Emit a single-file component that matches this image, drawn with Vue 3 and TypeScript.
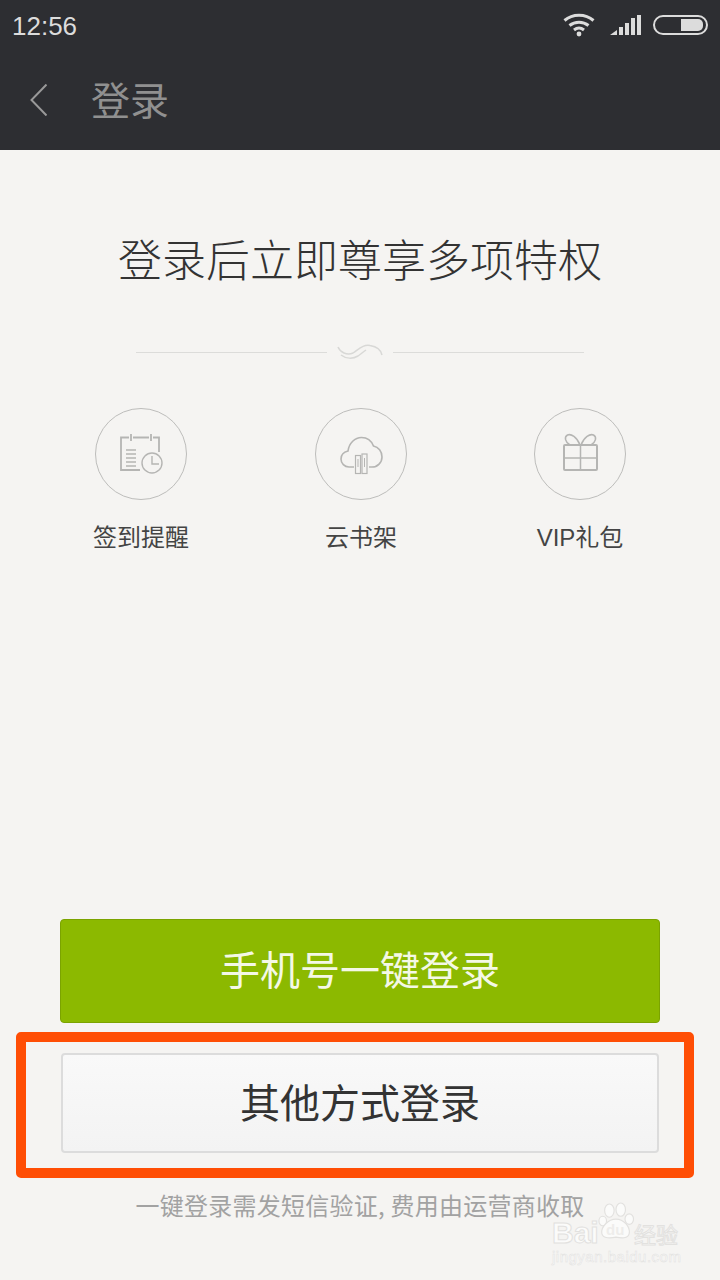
<template>
  <div class="page">
    <header class="top">
      <div class="status">
        <span class="time">12:56</span>
        <div class="status-icons">
          <svg class="wifi" width="32" height="24" viewBox="0 0 32 24" fill="none" stroke="#dcdcdc" stroke-width="3">
            <path d="M1.5 7.5C9.5 0.5 22.5 0.5 30.5 7.5" />
            <path d="M6.5 12.5C12 8 20 8 25.5 12.5" />
            <path d="M11 17C14 14.6 18 14.6 21 17" />
            <circle cx="16" cy="21" r="2.4" fill="#dcdcdc" stroke="none" />
          </svg>
          <svg class="signal" width="31" height="22" viewBox="0 0 31 22" fill="#dcdcdc">
            <path d="M0 21L7 16V21Z" />
            <rect x="9" y="13" width="4" height="8" />
            <rect x="15" y="9" width="4" height="12" />
            <rect x="21" y="4" width="4" height="17" />
            <rect x="27" y="1" width="4" height="20" />
          </svg>
          <div class="battery"><div class="battery-fill"></div></div>
        </div>
      </div>
      <div class="nav">
        <svg class="back" width="17" height="32" viewBox="0 0 17 32" fill="none" stroke="#999" stroke-width="2">
          <path d="M16.5 0.5L1.5 16L16.5 31.5" />
        </svg>
        <span class="nav-title">登录</span>
      </div>
    </header>

    <main class="body">
      <h1 class="headline">登录后立即尊享多项特权</h1>

      <div class="divider">
        <span class="rule"></span>
        <svg width="46" height="16" viewBox="0 0 46 16" fill="none" stroke="#d8d8d6" stroke-width="1.5">
          <path d="M1 3C3 8 10 12 16 9C22 5 27 0 33 1.500C39 2.500 44 6 45 11" />
          <path d="M4 11C9 15 16 15 21 12C24 10 26 8 29 6" />
        </svg>
        <span class="rule"></span>
      </div>

      <ul class="features">
        <li class="feature">
          <div class="circle">
            <svg width="90" height="90" viewBox="0 0 90 90" fill="none" stroke="#b5b5b3" stroke-width="1.4">
              <path d="M44 61H25V28.5H33M37 28.5H53M57 28.5H63V43" stroke-width="1.8" />
              <path d="M35 25V32M55 25V32" stroke-width="1.8" />
              <path d="M30 41H40M30 45H40M30 49H40M30 53H40M30 57H40" />
              <circle cx="56" cy="54" r="10" />
              <path d="M56 47V55H63" />
            </svg>
          </div>
          <span class="feature-label">签到提醒</span>
        </li>
        <li class="feature">
          <div class="circle">
            <svg width="90" height="90" viewBox="0 0 90 90" fill="none" stroke="#b5b5b3" stroke-width="1.6">
              <path d="M38 58H33C28.5 58 25 54.5 25 50C25 46 28 43 32 42C33 34 39 28.5 45.500 28.500C51 28.500 55.500 32 57.500 37C62.500 38 66 42.500 66 48C66 53.500 61.500 58 56 58H53" />
              <rect x="39.500" y="46.500" width="5" height="18" stroke-width="1.200" />
              <rect x="46" y="45" width="5" height="19.500" stroke-width="1.200" />
              <path d="M42 50V58M48.500 49V58" stroke-width="1" />
            </svg>
          </div>
          <span class="feature-label">云书架</span>
        </li>
        <li class="feature">
          <div class="circle">
            <svg width="90" height="90" viewBox="0 0 90 90" fill="none" stroke="#b5b5b3" stroke-width="1.500">
              <rect x="29" y="36" width="33" height="25" rx="1" stroke-width="2" />
              <path d="M45.500 36V61M29 49H62" />
              <path d="M45 36C42 28 36 24.500 32.500 26C29 28 30 33 35 36" />
              <path d="M46 36C49 28 55 24.500 58.500 26C62 28 61 33 56 36" />
            </svg>
          </div>
          <span class="feature-label">VIP礼包</span>
        </li>
      </ul>

      <div class="actions">
        <button class="btn-primary">手机号一键登录</button>
        <div class="highlight">
          <button class="btn-secondary">其他方式登录</button>
        </div>
        <p class="note">一键登录需发短信验证, 费用由运营商收取</p>
      </div>
    </main>

    <div class="watermark">
      <div class="mark-top">
        <span class="mark-bai">Bai</span>
        <div class="paw">
          <svg width="36" height="38" viewBox="0 0 38 40" fill="#fbfbfa" stroke="#e2e1df" stroke-width="1.200">
            <ellipse cx="12" cy="9" rx="5" ry="7" />
            <ellipse cx="24" cy="8" rx="5" ry="7" />
            <ellipse cx="33" cy="18" rx="4.500" ry="5.500" />
            <ellipse cx="5" cy="20" rx="4" ry="5" />
            <path d="M19 18C27 18 34 26 33 33C32 39 24 38 19 37C14 38 5 39 4 33C3 26 11 18 19 18Z" />
          </svg>
          <span class="mark-du">du</span>
        </div>
        <span class="mark-cn">经验</span>
      </div>
      <div class="mark-url">jingyan.baidu.com</div>
    </div>
  </div>
</template>

<script setup lang="ts">
</script>

<style scoped>
.page {
  position: relative;
  display: flex;
  flex-direction: column;
  width: 720px;
  height: 1280px;
  overflow: hidden;
  background: #f5f4f2;
  font-family: "Noto Sans CJK SC", "Liberation Sans", sans-serif;
}

.top {
  flex: none;
  height: 150px;
  background: #2d2e32;
}

.status {
  display: flex;
  justify-content: space-between;
  align-items: center;
  height: 50px;
  padding: 0 12px;
}

.time {
  font-family: "Liberation Sans", sans-serif;
  font-size: 26px;
  line-height: 50px;
  padding-top: 2px;
  color: #dcdcdc;
}

.status-icons {
  display: flex;
  align-items: center;
}

.wifi {
  margin-right: 15px;
}

.signal {
  margin-right: 12px;
}

.battery {
  box-sizing: border-box;
  display: flex;
  justify-content: flex-end;
  align-items: center;
  width: 55px;
  height: 20px;
  padding-right: 3px;
  border: 2px solid #dcdcdc;
  border-radius: 10px;
}

.battery-fill {
  width: 22px;
  height: 12px;
  border-radius: 0 5px 5px 0;
  background: #dcdcdc;
}

.nav {
  display: flex;
  align-items: center;
  height: 100px;
  padding-left: 30px;
}

.nav-title {
  margin-left: 44px;
  margin-bottom: 4px;
  font-size: 39px;
  font-weight: 400;
  line-height: 60px;
  color: #909090;
}

.body {
  flex: 1;
  display: flex;
  flex-direction: column;
}

.headline {
  margin: 78px 0 0;
  font-size: 44px;
  font-weight: 300;
  line-height: 60px;
  text-align: center;
  color: #333;
}

.divider {
  display: flex;
  align-items: center;
  justify-content: space-between;
  height: 20px;
  margin: 54px 136px 0;
}

.rule {
  width: 191px;
  height: 1px;
  background: #dcdcda;
}

.features {
  display: grid;
  grid-template-columns: 220px 220px 218px;
  margin: 46px 0 0;
  padding: 0 0 0 31px;
  list-style: none;
}

.feature {
  display: flex;
  flex-direction: column;
  align-items: center;
}

.circle {
  box-sizing: border-box;
  display: flex;
  align-items: center;
  justify-content: center;
  width: 92px;
  height: 92px;
  border: 1px solid #bdbdbb;
  border-radius: 50%;
}

.feature-label {
  margin-top: 20px;
  font-family: "Liberation Sans", "Noto Sans CJK SC", sans-serif;
  font-size: 24px;
  line-height: 36px;
  color: #444;
}

.actions {
  margin-top: auto;
  padding-bottom: 60px;
}

.btn-primary {
  display: block;
  box-sizing: border-box;
  width: 600px;
  height: 104px;
  margin: 0 auto;
  padding: 0 0 6px;
  border: 1px solid #7ba300;
  border-radius: 4px;
  background: #8cb900;
  font-family: inherit;
  font-size: 40px;
  color: #f4f8e6;
}

.highlight {
  box-sizing: border-box;
  height: 146px;
  margin: 9px 26px 0 16px;
  padding: 11px 25px 15px 35px;
  border: 10px solid #ff4e05;
  border-radius: 5px;
}

.btn-secondary {
  display: block;
  box-sizing: border-box;
  width: 100%;
  height: 100%;
  padding: 0 0 4px;
  border: 2px solid #dcdcdc;
  border-radius: 4px;
  background: linear-gradient(#f9f9f9, #f3f3f3);
  font-family: inherit;
  font-size: 40px;
  color: #333;
}

.note {
  margin: 12px 0 0;
  font-size: 24px;
  line-height: 30px;
  letter-spacing: 0.250px;
  text-align: center;
  color: #a2a2a2;
}

.watermark {
  position: absolute;
  left: 552px;
  top: 1202px;
  width: 130px;
  font-family: "Liberation Sans", sans-serif;
  color: #fbfbfa;
  -webkit-text-stroke: 1px #e2e1df;
}

.mark-top {
  display: flex;
  align-items: flex-end;
  height: 48px;
  white-space: nowrap;
}

.mark-bai {
  flex: none;
  width: 46px;
  margin-bottom: 4px;
  font-size: 30px;
  font-weight: 700;
  line-height: 26px;
}

.paw {
  position: relative;
  flex: none;
  width: 36px;
  height: 38px;
  margin-bottom: 10px;
}

.mark-du {
  position: absolute;
  left: 8px;
  top: 20px;
  font-size: 15px;
  font-weight: 700;
  line-height: 16px;
  color: #eeedeb;
  -webkit-text-stroke: 0;
}

.mark-cn {
  flex: none;
  font-family: "Noto Sans CJK SC", sans-serif;
  font-size: 22px;
  line-height: 34px;
}

.mark-url {
  font-size: 15px;
  line-height: 14px;
  letter-spacing: 0.500px;
  white-space: nowrap;
  -webkit-text-stroke: 0.500px #e2e1df;
}
</style>
